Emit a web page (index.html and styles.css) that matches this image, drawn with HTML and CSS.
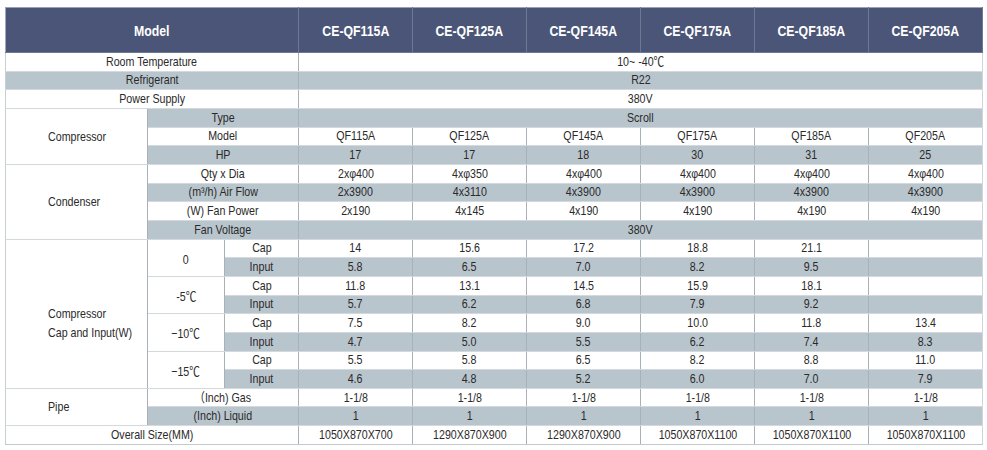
FILE: index.html
```html
<!DOCTYPE html>
<html lang="en">
<head>
<meta charset="utf-8">
<title>Specifications</title>
<link rel="stylesheet" href="styles.css">
</head>
<body>
<div class="wrap">
<table class="spec">
  <colgroup>
    <col class="c-l1"><col class="c-l2"><col class="c-l3">
    <col class="c-d"><col class="c-d"><col class="c-d"><col class="c-d"><col class="c-d"><col class="c-d">
  </colgroup>
  <thead>
    <tr class="head">
      <th colspan="3"><span>Model</span></th>
      <th><span>CE-QF115A</span></th><th><span>CE-QF125A</span></th><th><span>CE-QF145A</span></th><th><span>CE-QF175A</span></th><th><span>CE-QF185A</span></th><th><span>CE-QF205A</span></th>
    </tr>
  </thead>
  <tbody>
    <tr><td colspan="3"><span>Room Temperature</span></td><td colspan="6"><span>10~ -40℃</span></td></tr>
    <tr class="g"><td colspan="3"><span>Refrigerant</span></td><td colspan="6"><span>R22</span></td></tr>
    <tr><td colspan="3"><span>Power Supply</span></td><td colspan="6"><span>380V</span></td></tr>

    <tr class="g"><td rowspan="3" class="l1"><span>Compressor</span></td><td colspan="2"><span>Type</span></td><td colspan="6"><span>Scroll</span></td></tr>
    <tr><td colspan="2"><span>Model</span></td><td><span>QF115A</span></td><td><span>QF125A</span></td><td><span>QF145A</span></td><td><span>QF175A</span></td><td><span>QF185A</span></td><td><span>QF205A</span></td></tr>
    <tr class="g"><td colspan="2"><span>HP</span></td><td><span>17</span></td><td><span>17</span></td><td><span>18</span></td><td><span>30</span></td><td><span>31</span></td><td><span>25</span></td></tr>

    <tr><td rowspan="4" class="l1"><span>Condenser</span></td><td colspan="2"><span>Qty x Dia</span></td><td><span>2xφ400</span></td><td><span>4xφ350</span></td><td><span>4xφ400</span></td><td><span>4xφ400</span></td><td><span>4xφ400</span></td><td><span>4xφ400</span></td></tr>
    <tr class="g"><td colspan="2"><span>(m³/h) Air Flow</span></td><td><span>2x3900</span></td><td><span>4x3110</span></td><td><span>4x3900</span></td><td><span>4x3900</span></td><td><span>4x3900</span></td><td><span>4x3900</span></td></tr>
    <tr><td colspan="2"><span>(W) Fan Power</span></td><td><span>2x190</span></td><td><span>4x145</span></td><td><span>4x190</span></td><td><span>4x190</span></td><td><span>4x190</span></td><td><span>4x190</span></td></tr>
    <tr class="g"><td colspan="2"><span>Fan Voltage</span></td><td colspan="6"><span>380V</span></td></tr>

    <tr><td rowspan="8" class="l1 l1-low"><span>Compressor<br>Cap and Input(W)</span></td><td rowspan="2" class="temp"><span>0</span></td><td><span>Cap</span></td><td><span>14</span></td><td><span>15.6</span></td><td><span>17.2</span></td><td><span>18.8</span></td><td><span>21.1</span></td><td></td></tr>
    <tr class="g"><td><span>Input</span></td><td><span>5.8</span></td><td><span>6.5</span></td><td><span>7.0</span></td><td><span>8.2</span></td><td><span>9.5</span></td><td></td></tr>
    <tr><td rowspan="2" class="temp"><span>-5℃</span></td><td><span>Cap</span></td><td><span>11.8</span></td><td><span>13.1</span></td><td><span>14.5</span></td><td><span>15.9</span></td><td><span>18.1</span></td><td></td></tr>
    <tr class="g"><td><span>Input</span></td><td><span>5.7</span></td><td><span>6.2</span></td><td><span>6.8</span></td><td><span>7.9</span></td><td><span>9.2</span></td><td></td></tr>
    <tr><td rowspan="2" class="temp"><span>−10℃</span></td><td><span>Cap</span></td><td><span>7.5</span></td><td><span>8.2</span></td><td><span>9.0</span></td><td><span>10.0</span></td><td><span>11.8</span></td><td><span>13.4</span></td></tr>
    <tr class="g"><td><span>Input</span></td><td><span>4.7</span></td><td><span>5.0</span></td><td><span>5.5</span></td><td><span>6.2</span></td><td><span>7.4</span></td><td><span>8.3</span></td></tr>
    <tr><td rowspan="2" class="temp"><span>−15℃</span></td><td><span>Cap</span></td><td><span>5.5</span></td><td><span>5.8</span></td><td><span>6.5</span></td><td><span>8.2</span></td><td><span>8.8</span></td><td><span>11.0</span></td></tr>
    <tr class="g"><td><span>Input</span></td><td><span>4.6</span></td><td><span>4.8</span></td><td><span>5.2</span></td><td><span>6.0</span></td><td><span>7.0</span></td><td><span>7.9</span></td></tr>

    <tr><td rowspan="2" class="l1"><span>Pipe</span></td><td colspan="2"><span>（Inch) Gas</span></td><td><span>1-1/8</span></td><td><span>1-1/8</span></td><td><span>1-1/8</span></td><td><span>1-1/8</span></td><td><span>1-1/8</span></td><td><span>1-1/8</span></td></tr>
    <tr class="g"><td colspan="2"><span>(Inch) Liquid</span></td><td><span>1</span></td><td><span>1</span></td><td><span>1</span></td><td><span>1</span></td><td><span>1</span></td><td><span>1</span></td></tr>

    <tr><td colspan="3"><span>Overall Size(MM)</span></td><td><span>1050X870X700</span></td><td><span>1290X870X900</span></td><td><span>1290X870X900</span></td><td><span>1050X870X1100</span></td><td><span>1050X870X1100</span></td><td><span>1050X870X1100</span></td></tr>
  </tbody>
</table>
</div>
</body>
</html>
```

FILE: styles.css
```css
html, body {
  margin: 0;
  padding: 0;
  background: #ffffff;
}

.wrap {
  padding: 7px 5px 0 5px;
}

.spec {
  width: 977px;
  border-collapse: collapse;
  table-layout: fixed;
  font-family: "Liberation Sans", Arial, "Noto Sans CJK SC", sans-serif;
  font-size: 13px;
  color: #2a2a2a;
}

.c-l1 { width: 142px; }
.c-l2 { width: 77px; }
.c-l3 { width: 74px; }
.c-d { width: 114px; }

.spec th > span,
.spec td > span {
  display: inline-block;
  transform: scaleX(0.82);
  transform-origin: center;
}

.head {
  height: 45px;
}

.head th {
  background: #4b5577;
  color: #ffffff;
  font-size: 15px;
  font-weight: bold;
  text-align: center;
  border: 1px solid #6f7893;
  border-top-color: #9aa1b0;
  padding: 0;
}

.head th:first-child {
  border-left-color: #a3a9b6;
}

.spec tbody tr {
  height: 18.667px;
}

.spec td {
  padding: 0;
  text-align: center;
  vertical-align: middle;
  line-height: 14px;
  border: 1px solid #d4d9dd;
  border-left-color: #a9b1b8;
  border-right-color: #a9b1b8;
  background: #ffffff;
  white-space: nowrap;
}

.spec td:first-child {
  border-left-color: #c9ced3;
}

.spec td:last-child {
  border-right-color: #d0d5d9;
}

.spec tr.g td {
  background: #b9c5cd;
}

.spec tr.g td.l1,
.spec tr.g td.temp {
  background: #ffffff;
}

.spec td.l1 {
  text-align: left;
  padding-left: 42px;
  background: #ffffff;
}

.spec td.l1-low {
  padding-top: 18px;
}

.spec td.temp > span {
  position: relative;
  top: 2px;
}

.spec td.l1 > span {
  transform-origin: left center;
  line-height: 19px;
  text-align: left;
}

.spec tbody tr:last-child td {
  border-bottom-color: #c4c9ce;
}
```
